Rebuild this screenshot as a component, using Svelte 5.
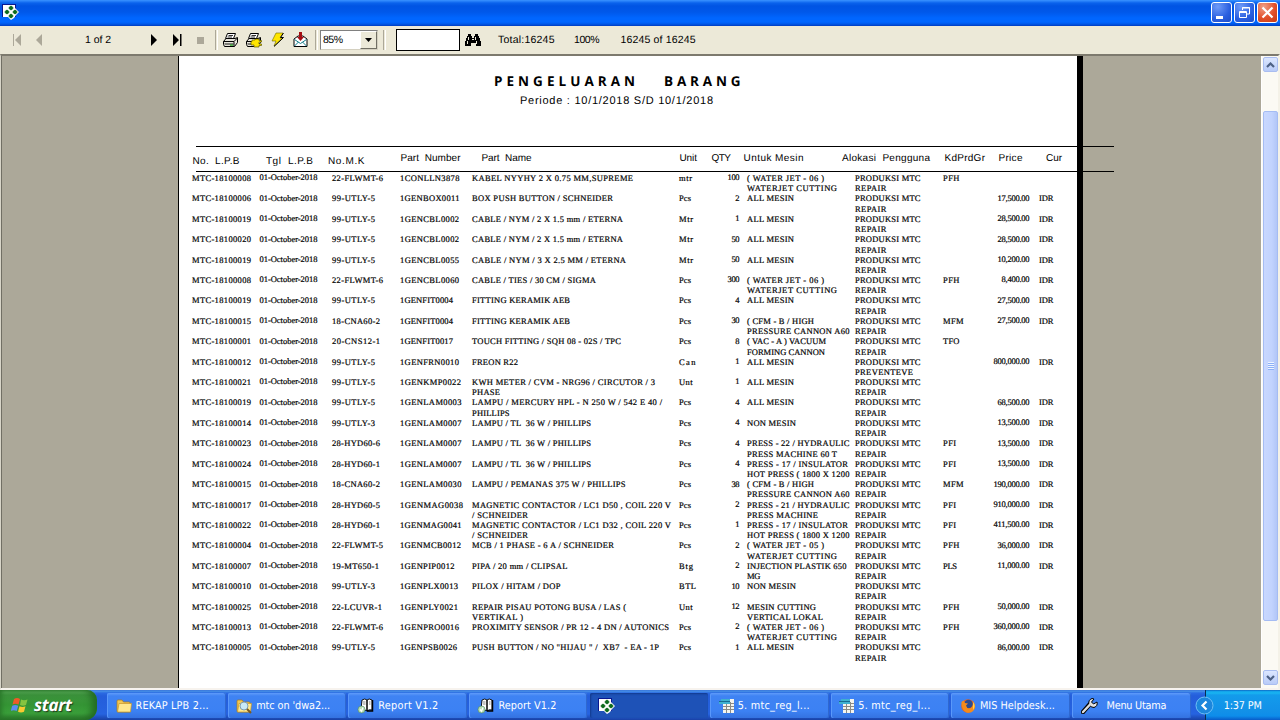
<script>
  // Spreads the letters of a label so that it takes the given width.
  function fit(node, width) {
    const range = document.createRange();
    range.selectNodeContents(node);
    const natural = range.getBoundingClientRect().width;
    const gap = (width - natural) / Math.max(1, node.textContent.length - 1);
    node.style.letterSpacing = gap + 'px';
    node.style.marginRight = -gap + 'px';
  }

  const WJ6 = [['( WATER JET - 06 )', 77], ['WATERJET CUTTING', 90]];
  const WJ5 = [['( WATER JET - 05 )', 77], ['WATERJET CUTTING', 90]];
  const ALL = [['ALL MESIN', 47]];
  const NON = [['NON MESIN', 49]];
  const CFM = [['( CFM - B / HIGH', 67], ['PRESSURE CANNON A60', 102.5]];
  const P17 = [['PRESS - 17 / INSULATOR', 101], ['HOT PRESS ( 1800 X 1200', 102.5]];
  const MTC = 'PRODUKSI MTC';
  const TL = [['LAMPU / TL  36 W / PHILLIPS', 119]];
  const mkW = { F: 51, U: 43, H: 48, C: 48, M: 47, L: 50 };
  const kdW = { PFH: 16.5, MFM: 20.5, TFO: 16.5, PFI: 13.2, PLS: 14 };
  const unitW = { mtr: 13, Pcs: 12, Mtr: 14, Can: 16.5, Unt: 13.5, Btg: 14, BTL: 17 };

  // no, m.k, part number, its width, name lines, unit, qty, machine lines, group, price
  const rows = [
    ['08', '22-FLWMT-6', '1CONLLN3878', 59.5, [['KABEL NYYHY 2 X 0.75 MM,SUPREME', 161]], 'mtr', '100', WJ6, 'PFH', ''],
    ['06', '99-UTLY-5', '1GENBOX0011', 59.5, [['BOX PUSH BUTTON / SCHNEIDER', 141]], 'Pcs', '2', ALL, '', '17,500.00'],
    ['19', '99-UTLY-5', '1GENCBL0002', 59, [['CABLE / NYM / 2 X 1.5 mm / ETERNA', 151]], 'Mtr', '1', ALL, '', '28,500.00'],
    ['20', '99-UTLY-5', '1GENCBL0002', 59, [['CABLE / NYM / 2 X 1.5 mm / ETERNA', 151]], 'Mtr', '50', ALL, '', '28,500.00'],
    ['19', '99-UTLY-5', '1GENCBL0055', 59, [['CABLE / NYM / 3 X 2.5 MM / ETERNA', 154]], 'Mtr', '50', ALL, '', '10,200.00'],
    ['08', '22-FLWMT-6', '1GENCBL0060', 59, [['CABLE / TIES / 30 CM / SIGMA', 124]], 'Pcs', '300', WJ6, 'PFH', '8,400.00'],
    ['19', '99-UTLY-5', '1GENFIT0004', 53, [['FITTING KERAMIK AEB', 98]], 'Pcs', '4', ALL, '', '27,500.00'],
    ['15', '18-CNA60-2', '1GENFIT0004', 53, [['FITTING KERAMIK AEB', 98]], 'Pcs', '30', CFM, 'MFM', '27,500.00'],
    ['01', '20-CNS12-1', '1GENFIT0017', 53, [['TOUCH FITTING / SQH 08 - 02S / TPC', 149]], 'Pcs', '8', [['( VAC - A ) VACUUM', 79], ['FORMING CANNON', 78]], 'TFO', ''],
    ['12', '99-UTLY-5', '1GENFRN0010', 59, [['FREON R22', 46]], 'Can', '1', ALL, '', '800,000.00'],
    ['21', '99-UTLY-5', '1GENKMP0022', 61, [['KWH METER / CVM - NRG96 / CIRCUTOR / 3', 183], ['PHASE', 28]], 'Unt', '1', ALL, '', ''],
    ['19', '99-UTLY-5', '1GENLAM0003', 61.5, [['LAMPU / MERCURY HPL - N 250 W / 542 E 40 /', 190], ['PHILLIPS', 37.5]], 'Pcs', '4', ALL, '', '68,500.00'],
    ['14', '99-UTLY-3', '1GENLAM0007', 61.5, TL, 'Pcs', '4', NON, '', '13,500.00'],
    ['23', '28-HYD60-6', '1GENLAM0007', 61.5, TL, 'Pcs', '4', [['PRESS - 22 / HYDRAULIC', 102.5], ['PRESS MACHINE 60 T', 90]], 'PFI', '13,500.00'],
    ['24', '28-HYD60-1', '1GENLAM0007', 61.5, TL, 'Pcs', '4', P17, 'PFI', '13,500.00'],
    ['15', '18-CNA60-2', '1GENLAM0030', 61.5, [['LAMPU / PEMANAS 375 W / PHILLIPS', 153.5]], 'Pcs', '38', CFM, 'MFM', '190,000.00'],
    ['17', '28-HYD60-5', '1GENMAG0038', 63, [['MAGNETIC CONTACTOR / LC1 D50 , COIL 220 V', 199], ['/ SCHNEIDER', 56]], 'Pcs', '2', [['PRESS - 21 / HYDRAULIC', 102.5], ['PRESS MACHINE', 71]], 'PFI', '910,000.00'],
    ['22', '28-HYD60-1', '1GENMAG0041', 61.5, [['MAGNETIC CONTACTOR / LC1 D32 , COIL 220 V', 199], ['/ SCHNEIDER', 56]], 'Pcs', '1', P17, 'PFI', '411,500.00'],
    ['04', '22-FLWMT-5', '1GENMCB0012', 61, [['MCB / 1 PHASE - 6 A / SCHNEIDER', 142]], 'Pcs', '2', WJ5, 'PFH', '36,000.00'],
    ['07', '19-MT650-1', '1GENPIP0012', 54.5, [['PIPA / 20 mm / CLIPSAL', 95.5]], 'Btg', '2', [['INJECTION PLASTIK 650', 99.5], ['MG', 13.5]], 'PLS', '11,000.00'],
    ['10', '99-UTLY-3', '1GENPLX0013', 58, [['PILOX / HITAM / DOP', 88.5]], 'BTL', '10', NON, '', ''],
    ['25', '22-LCUVR-1', '1GENPLY0021', 58, [['REPAIR PISAU POTONG BUSA / LAS (', 154], ['VERTIKAL )', 51]], 'Unt', '12', [['MESIN CUTTING', 69], ['VERTICAL LOKAL', 76]], 'PFH', '50,000.00'],
    ['13', '22-FLWMT-6', '1GENPRO0016', 59, [['PROXIMITY SENSOR / PR 12 - 4 DN / AUTONICS', 197]], 'Pcs', '2', WJ6, 'PFH', '360,000.00'],
    ['05', '99-UTLY-5', '1GENPSB0026', 57, [['PUSH BUTTON / NO "HIJAU " /  XB7  - EA - 1P', 187]], 'Pcs', '1', ALL, '', '86,000.00']
  ];

  const heads = [
    ['No.  L.P.B', 47, 1], ['Tgl  L.P.B', 47, 1], ['No.M.K', 36.5, 1], ['Part  Number', 60], ['Part  Name', 50],
    ['Unit', 17.5], ['QTY', 19.5], ['Untuk Mesin', 60], ['Alokasi  Pengguna', 88], ['KdPrdGr', 40.5], ['Price', 24], ['Cur', 16]
  ];

  const tasks = [
    ['folder', 'REKAP LPB 2...', 73, 4],
    ['share', 'mtc on \'dwa2...', 74, 4],
    ['book', 'Report V1.2', 60, 4.5],
    ['book', 'Report V1.2', 58, 4],
    ['app', '', 0, 0],
    ['calc', '5. mtc_reg_l...', 72, 3],
    ['calc', '5. mtc_reg_l...', 72, 3],
    ['fox', 'MIS Helpdesk...', 75, 4],
    ['wrench', 'Menu Utama', 60, 9]
  ];
</script>

{#snippet appIcon()}
  <svg width="17" height="17" viewBox="0 0 17 17">
    <rect x="0" y="1" width="14" height="13" fill="#0a1890" />
    <rect x="1" y="2" width="12" height="12" fill="#fff" />
    <path d="M9 2l3 2 2 2 3 3-3 3-2 3-3 2-3-3-3-2-2-3 3-3 3-2z" fill="#fff" />
    <g fill="#0c6a1c">
      <path d="M7 4.500L8.500 3h1L11 4.500v1L9.500 7h-1L7 5.500zM3 8.500L4.500 7h1L7 8.500v1L5.500 11h-1L3 9.500zM11 8.500L12.500 7h1L15 8.500v1L13.500 11h-1L11 9.500zM7 12.500L8.500 11h1l1.500 1.500v1L9.500 15h-1L7 13.500z" stroke="#0c6a1c" stroke-width=".5" />
    </g>
  </svg>
{/snippet}

{#snippet printer(setup)}
  <svg width="17" height="16" viewBox="0 0 17 16">
    <path d="M5.500 1.500h8l-2 5h-8z" fill="#fff" stroke="#000" />
    <path d="M6.500 3.500h4.500M5.500 5h4.500" stroke="#000" stroke-width=".8" />
    <path d="M1.500 9.500l2.500-3h9l2.500-1v5l-3 4h-10l-1-2z" fill="#e6e4da" stroke="#000" />
    <path d="M1.500 9.500h10.500l3.500-3.500M12 9.500v5" fill="none" stroke="#000" />
    <path d="M2.500 12h9" stroke="#000" stroke-width=".9" />
    {#if setup}
      <path d="M7 8h3V7h4v1.500h2.500V10H14v2h2.500v1.500H14V15H9v-2H6V9.500h1z" fill="#ffe600" stroke="#5c5600" stroke-width=".7" />
    {:else}
      <rect x="8" y="12.500" width="3" height="1.200" fill="#19a519" />
    {/if}
  </svg>
{/snippet}

{#snippet chevron(down)}
  <svg width="9" height="6" viewBox="0 0 9 6"><path d={down ? 'M1 1l3.5 3.5L8 1' : 'M1 5l3.5-3.5L8 5'} fill="none" stroke="#4d6185" stroke-width="2.2" /></svg>
{/snippet}

<div class="screen">
  <header class="title">
    <span class="logo">{@render appIcon()}</span>
    <div class="controls">
      <button aria-label="Minimize"><svg width="19" height="19" viewBox="0 0 19 19"><rect x="4" y="13" width="7" height="3" fill="#fff" /></svg></button>
      <button aria-label="Restore"><svg width="19" height="19" viewBox="0 0 19 19" fill="none" stroke="#fff"><path d="M7.500 7V4.500h7V11H12M7 5h8" /><path d="M4.500 8.500h7v6h-7zM4 9.500h8" /></svg></button>
      <button class="close" aria-label="Close"><svg width="19" height="19" viewBox="0 0 19 19"><path d="M4.500 4.500l10 10M14.500 4.500l-10 10" stroke="#fff" stroke-width="2.200" /></svg></button>
    </div>
  </header>

  <nav class="toolbar">
    <svg width="12" height="12" viewBox="0 0 12 12"><path d="M2.500 0v12" stroke="#aca899" /><path d="M10 0v12L4 6z" fill="#aca899" /></svg>
    <svg width="12" height="12" viewBox="0 0 12 12"><path d="M6 0v12L0 6z" fill="#aca899" /></svg>
    <span><span class="t" use:fit={26}>1 of 2</span></span>
    <svg width="12" height="12" viewBox="0 0 12 12"><path d="M0 0v12l6-6z" /></svg>
    <svg width="12" height="12" viewBox="0 0 12 12"><path d="M0 0v12l6-6zM7 0h1.500v12H7z" /></svg>
    <svg width="12" height="12" viewBox="0 0 12 12"><rect y="3" width="7" height="7" fill="#aca899" /></svg>
    <i class="sep"></i>
    {@render printer(false)}
    {@render printer(true)}
    <svg width="14" height="16" viewBox="0 0 14 16"><path d="M5 1h7L9 6h3L3 14l2-5H1z" fill="#ffe600" stroke="#6b6400" stroke-width=".6" /><path d="M12.500 1L9.500 5.500h3L3 14.500" fill="none" stroke="#000" /></svg>
    <svg width="16" height="16" viewBox="0 0 16 16"><path d="M1 7l4-3h5l4 3v7.500H1z" fill="#fff" stroke="#000" /><path d="M1.500 7.500l6 4 6-4M1.500 14l4-4M13.500 14l-4-4" fill="none" stroke="#127c8a" /><path d="M6 0h3v5h2L7.500 9 4 5h2z" fill="#a30d12" /></svg>
    <i class="sep"></i>
    <div class="combo"><span class="t" use:fit={20}>85%</span><b><svg width="7" height="4"><path d="M0 0h7L3.500 4z" /></svg></b></div>
    <i class="sep"></i>
    <div class="search"></div>
    <svg width="16" height="15" viewBox="0 0 16 15" shape-rendering="crispEdges"><path d="M3 1h3v2h1v2h2V3h1V1h3v2h1v2h1v3h1v5h-5v-3H6v3H0V8h1V5h1V3h1z" /><path d="M3 4h1v3H3zM2 8h1v3H2zM10 4h1v3h-1zM11 8h1v3h-1zM7 6h2v1H7z" fill="#ece9d8" /></svg>
    <span><span class="t" use:fit={56.5}>Total:16245</span></span>
    <span><span class="t" use:fit={25.5}>100%</span></span>
    <span><span class="t" use:fit={75}>16245 of 16245</span></span>
  </nav>

  <main class="viewer">
    <section class="page">
      <h1><span class="t" use:fit={141}>PENGELUARAN</span><span class="t" use:fit={76.5}>BARANG</span></h1>
      <p class="period"><span class="t" use:fit={193}>Periode : 10/1/2018 S/D 10/1/2018</span></p>
      <div class="heads">
        {#each heads as [label, w, low]}
          <div class:low><span class="t" use:fit={w}>{label}</span></div>
        {/each}
      </div>
      <div class="rows">
        {#each rows as [no, mk, part, pw, name, unit, qty, mesin, kd, price]}
          <div class="row">
            <div><span class="t" use:fit={59}>MTC-181000{no}</span></div>
            <div class="up"><span class="t" use:fit={58}>01-October-2018</span></div>
            <div><span class="t" use:fit={mkW[mk[3]]}>{mk}</span></div>
            <div><span class="t" use:fit={pw}>{part}</span></div>
            <div>{#each name as [line, w]}<p><span class="t" use:fit={w}>{line}</span></p>{/each}</div>
            <div><span class="t" use:fit={unitW[unit]}>{unit}</span></div>
            <div class="qty up"><span class="t" use:fit={qty.length * 4}>{qty}</span></div>
            <div>{#each mesin as [line, w]}<p><span class="t" use:fit={w}>{line}</span></p>{/each}</div>
            <div>
              <p><span class="t" use:fit={65.5}>{MTC}</span></p>
              <p>{#if no === '12'}<span class="t" use:fit={58}>PREVENTEVE</span>{:else}<span class="t" use:fit={31.5}>REPAIR</span>{/if}</p>
            </div>
            <div>{#if kd}<span class="t" use:fit={kdW[kd]}>{kd}</span>{/if}</div>
            <div class="price up">{#if price}<span class="t" use:fit={price.length * 4 - 4}>{price}</span>{/if}</div>
            <div>{#if price}<span class="t" use:fit={14.5}>IDR</span>{/if}</div>
          </div>
        {/each}
      </div>
    </section>
    <aside class="scroll">
      <div class="sb">{@render chevron(false)}</div>
      <div class="thumb"><i></i><i></i><i></i><i></i></div>
      <div class="sb">{@render chevron(true)}</div>
    </aside>
  </main>

  <footer class="taskbar">
    <div class="start">
      <svg width="18" height="18" viewBox="0 0 18 18">
        <path d="M3 3q3-2 6 0L7.500 8.500q-3-1.500-6 0z" fill="#ee5a28" />
        <path d="M10 3.500q3 1.500 6.500 0L15 9q-3 1.500-6 0z" fill="#86c440" />
        <path d="M1.200 9.700q3-1.500 6 0L5.700 15q-3-1.500-6 0z" fill="#5b8df0" />
        <path d="M8.500 10.200q3 1.500 6 0L13 15.700q-3 1.500-6 0z" fill="#fbc931" />
      </svg>
      <span class="t" use:fit={38}>start</span>
    </div>
    <div class="tasks">
      {#each tasks as [icon, label, w, gap]}
        <div class="task" class:active={icon === 'app'}>
          {#if icon === 'folder' || icon === 'share'}
            <svg width="16" height="16" viewBox="0 0 16 16"><path d="M1 3q0-1 1-1h4l1.500 2H13q1 0 1 1v9H2q-1 0-1-1z" fill="#f0c654" stroke="#a8791a" stroke-width=".7" /><path d="M1.500 14L3 5.500h12.500L14.500 14z" fill="#ffe98f" stroke="#c6952a" stroke-width=".7" />
              {#if icon === 'share'}<circle cx="8" cy="8" r="4" fill="#c9eaf7" stroke="#7f9db0" /><path d="M11 11l4 4" stroke="#7a5a20" stroke-width="2" />{/if}
            </svg>
          {:else if icon === 'book'}
            <svg width="17" height="16" viewBox="0 0 17 16"><path d="M5 2q3-2 5 0 2-2 5 0v10q-3-1-5 1-2-2-6-1z" fill="#fff" stroke="#000" stroke-width=".9" /><path d="M10 2v11M15.500 2v11H10" fill="none" stroke="#000" stroke-width="1.500" /><path d="M6 4h2.500M6 6h2.500M12 4h1.500M12 6h1.500" stroke="#555" stroke-width=".7" /><circle cx="4.500" cy="11.500" r="3.500" fill="#b5dcb5" stroke="#4b8a5c" stroke-width=".6" /><path d="M3 11.500l1.500 1.500 1.500-3.500" fill="none" stroke="#fff" stroke-width="1.300" /></svg>
          {:else if icon === 'app'}
            {@render appIcon()}
          {:else if icon === 'calc'}
            <svg width="16" height="16" viewBox="0 0 16 16"><path d="M4 1h11v14H4z" fill="#f4f4ee" /><path d="M4 5.500h11M4 8.500h11M4 11.500h11M7.500 4v11M11.500 4v11" stroke="#8b8b86" /><path d="M2 1h9v2H2zM0 4h11v2H0z" fill="#3fb0cf" /><path d="M0 3.500h11" stroke="#176c91" /></svg>
          {:else if icon === 'fox'}
            <svg width="16" height="16" viewBox="0 0 16 16"><circle cx="8" cy="8" r="6.800" fill="#e8611a" /><circle cx="8.500" cy="6" r="4.300" fill="#294b91" /><path d="M1.500 4l2-1.500L5 5l3 .5-2 2q1 4 5 2.500 3-2 1.500-7 4 4 2 8-3 5-8 3.500Q1 12 1.500 4z" fill="#f38b1c" /><path d="M13 4q3 4 0 8 0-4 0-8z" fill="#ffd34a" /></svg>
          {:else}
            <svg width="17" height="16" viewBox="0 0 17 16"><path d="M2 14l7-8" stroke="#000" stroke-width="4.400" stroke-linecap="round" /><path d="M8 6q-1-4 3-5.500l2 .5-2.500 3 2 2L16 4q1 4-3 5.500-3 .5-5-3.500z" fill="#e4e4e4" stroke="#000" /><path d="M2 14l7.500-8" stroke="#ddd" stroke-width="2.400" stroke-linecap="round" /></svg>
          {/if}
          {#if label}<span class="lbl" style:margin-left="{gap}px"><span class="t" use:fit={w}>{label}</span></span>{/if}
        </div>
      {/each}
    </div>
    <div class="tray">
      <svg class="knob" width="19" height="19" viewBox="0 0 19 19"><circle cx="9.500" cy="9.500" r="8.500" fill="#1c86dc" stroke="#6fc0f5" /><path d="M11.500 5.500l-4 4 4 4" fill="none" stroke="#fff" stroke-width="2.200" /></svg>
      <span class="t clock" use:fit={38}>1:37 PM</span>
    </div>
  </footer>
</div>

<style>
  :global(body) { margin: 0; overflow: hidden; }
  .screen { width: 1280px; height: 720px; display: flex; flex-direction: column; background: #ece9d8; font-family: "Liberation Sans", Arial, sans-serif; font-size: 11px; color: #000; text-rendering: geometricPrecision; overflow: hidden; }
  .t { display: inline-block; white-space: pre; }
  p, h1 { margin: 0; }
  svg { display: block; flex: none; }

  .title { height: 26px; flex: none; display: flex; justify-content: space-between; box-sizing: border-box; background: linear-gradient(#3a93ff 0, #2a83fa 1px, #0a62ec 3px, #0054e3 6px, #0058ea 12px, #0066ff 18px, #0066ff 22px, #0058e8 24px, #003cc0 26px); }
  .logo { padding: 3px 0 0 2px; }
  .controls { display: flex; gap: 2px; padding: 2px 2px 0 0; }
  .controls button { width: 21px; height: 21px; padding: 0; border: 1px solid #fff; border-radius: 3px; background: radial-gradient(circle at 30% 20%, #6f9bf8, #2a5fe0 60%, #1c4cc8); }
  .controls .close { background: radial-gradient(circle at 30% 20%, #f0a088, #e2502a 55%, #c63a14); }

  .toolbar { height: 28px; flex: none; display: grid; align-items: center; grid-template-columns: 25px 49px 66px 22px 24px 18px 7px 23px 26px 22px 22px 5px 63px 13px 69px 33px 76px 46.5px 80px; padding-left: 11px; font-size: 10.500px; }
  .sep { width: 1px; height: 20px; border-left: 1px solid #aca899; border-right: 1px solid #fff; }
  .combo { width: 58px; height: 20px; box-sizing: border-box; border: 1px solid #808080; border-right-color: #d4d0c0; border-bottom-color: #d4d0c0; background: #fff; display: flex; justify-content: space-between; align-items: center; padding-left: 2px; }
  .combo b { width: 15px; height: 16px; border: 1px solid #fff; border-right-color: #716f64; border-bottom-color: #716f64; background: #ece9d8; display: grid; place-items: center; }
  .search { width: 62px; height: 20px; border: 1px solid #000; background: #fff; }

  .viewer { flex: none; height: 632px; border-top: 2px solid #7d7a6e; border-left: 1px solid #d8d5c8; border-right: 2px solid #f4f2e8; border-bottom: 2px solid #f7f3ee; background: #aca899; display: flex; justify-content: space-between; box-shadow: inset 1px 0 #716f64; }
  .page { width: 898px; margin-left: 177px; background: #fff; border-left: 1px solid #000; border-right: 6px solid #000; display: flex; flex-direction: column; height: 632px; }
  h1 { font: bold 13.500px/18px "Open Sans", sans-serif; margin: 16px 0 0 315px; display: flex; gap: 29px; white-space: nowrap; }
  .period { font-size: 11px; line-height: 14px; margin: 4px 0 0 341px; }
  .heads { width: 918px; box-sizing: border-box; flex: none; height: 26px; margin: 38px 0 0 17px; border-top: 1px solid #000; border-bottom: 1px solid #000; display: grid; grid-template-columns: 73.5px 62px 72.5px 81px 198px 32px 32px 98.5px 102.5px 54px 47.5px 40px; font-size: 10px; line-height: 12px; }
  .heads > div { padding-top: 6px; margin-left: -3.500px; white-space: nowrap; }
  .heads > .low { padding-top: 9px; }
  .rows { margin-left: 13px; padding-top: 1px; font-family: "Liberation Serif", "Times New Roman", serif; font-size: 8.500px; line-height: 10.300px; -webkit-text-stroke: .2px #000; }
  .row { height: 20.420px; display: grid; grid-template-columns: 67.5px 72.5px 68px 72px 207px 30px 38px 108px 88px 40px 56px 40px; }
  .row p { height: 10.300px; }
  .row > .up { margin-top: -.600px; }
  .qty { text-align: right; padding-right: 7.500px; }
  .price { text-align: right; padding-right: 9.500px; }

  .scroll { width: 17px; background: #fbfaf4; display: flex; flex-direction: column; box-sizing: border-box; padding: 1px; border-left: 1px solid #fff; }
  .sb { width: 15px; height: 15px; box-sizing: border-box; border: 1px solid #a9bdf0; border-radius: 2px; background: linear-gradient(#dce7ff, #b8cbf8); display: grid; place-items: center; flex: none; }
  .thumb { height: 510px; box-sizing: border-box; width: 15px; margin: 39px 0 49px; border: 1px solid #a5bcf3; border-radius: 2px; background: linear-gradient(90deg, #c9d8ff, #c2d3fe 60%, #b2c6f7); display: flex; flex-direction: column; justify-content: center; align-items: center; }
  .thumb i { width: 6px; height: 1px; background: #eef4ff; border-bottom: 1px solid #8cb0f8; flex: none; }

  .taskbar { height: 30px; flex: none; display: flex; background: linear-gradient(#3168d5 0, #4993e6 1px, #2b6ae2 3px, #245edb 6px, #2663e0 24px, #1941a5 30px); font-family: "DejaVu Sans Condensed", "DejaVu Sans", sans-serif; font-size: 10.800px; color: #fff; }
  .start { width: 97px; box-sizing: border-box; display: flex; align-items: center; padding-left: 11px; gap: 5px; border-radius: 0 10px 12px 0; background: linear-gradient(#57a957 0, #5db35d 2px, #3c933c 5px, #349434 15px, #3a9f3a 23px, #2d7a2d 30px); box-shadow: inset -5px 0 7px #236b23, inset 2px 0 4px #2c7c2c; font: italic bold 17px "Open Sans", sans-serif; text-shadow: 1px 1px 1px #1b3d1b; }
  .start .t { line-height: 20px; margin-top: -1px; }
  .tasks { display: grid; grid-template-columns: repeat(9, 118.500px); gap: 2.130px; margin: 3px 0 2px 10px; }
  .task { display: flex; align-items: center; padding-left: 8.500px; box-sizing: border-box; border-radius: 2px; background: linear-gradient(#5f9bfa 0, #3f83f3 3px, #3c81f3 18px, #3472e0 25px); box-shadow: inset 1px 0 #5a98fa, inset -1px 0 #2f68d0; }
  .active { background: #1e52b7; box-shadow: inset 1px 1px 2px #123a8c; }
  .lbl { line-height: 14px; }
  .tray { flex: 1; margin-left: 14.300px; display: flex; align-items: center; background: linear-gradient(#0c59b9 0, #139ee9 1px, #18b5f2 3px, #139beb 5px, #1290e8 22px, #0d8dea 26px, #095bc9 30px); border-left: 1px solid #092e51; }
  .knob { margin: 0 9.500px 0 -10.500px; }
  .clock { padding-top: 1px; }
</style>
